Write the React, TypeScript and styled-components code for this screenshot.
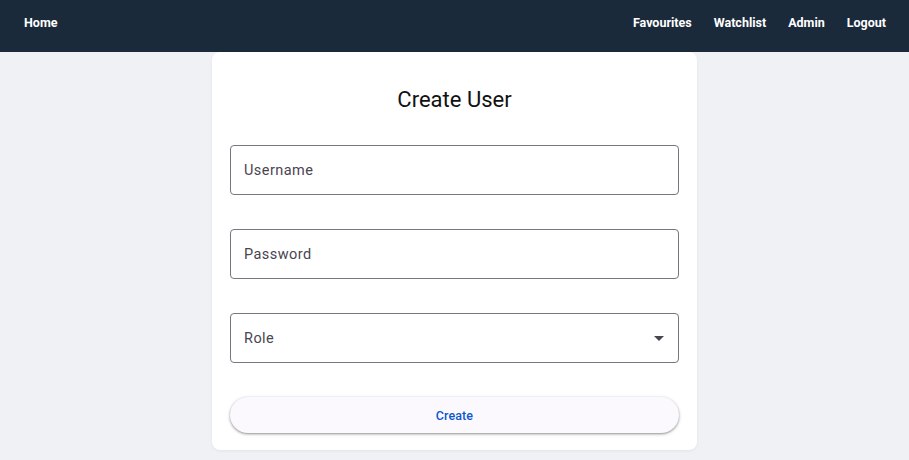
import React from "react";
import styled, { createGlobalStyle } from "styled-components";

const Global = createGlobalStyle`
  html, body { margin: 0; padding: 0; }
  body {
    background: #f0f1f5;
    font-family: Roboto, "Liberation Sans", sans-serif;
    min-height: 460px;
  }
`;

const Nav = styled.nav`
  height: 52px;
  background: #1b2a3b;
  display: flex;
  align-items: flex-start;
  justify-content: space-between;
  padding: 0 23px 0 24px;
  box-sizing: border-box;
`;

const NavGroup = styled.div`
  display: flex;
  gap: 22px;
`;

const NavLink = styled.a`
  color: #ffffff;
  font-size: 12.5px;
  font-weight: 700;
  line-height: 16px;
  padding-top: 15px;
  text-decoration: none;
  cursor: pointer;
`;

const Main = styled.main`
  display: flex;
  justify-content: center;
`;

const Card = styled.section`
  width: 485px;
  box-sizing: border-box;
  background: #ffffff;
  border-radius: 8px;
  padding: 30px 18px 17px;
  display: flex;
  flex-direction: column;
  box-shadow: 0 1px 3px rgba(0, 0, 0, 0.06);
`;

const Title = styled.h1`
  margin: 0 0 27px;
  text-align: center;
  font-size: 22px;
  font-weight: 400;
  line-height: 36px;
  color: #111111;
`;

const Field = styled.div`
  position: relative;
  height: 50px;
  box-sizing: border-box;
  border: 1px solid #79747e;
  border-radius: 4px;
  display: flex;
  align-items: center;
  padding: 0 14px 0 13px;
  margin-bottom: 34px;
`;

const Label = styled.span`
  flex: 1;
  font-size: 14.5px;
  letter-spacing: 0.45px;
  color: #49454f;
`;

const Caret = styled.span`
  width: 0;
  height: 0;
  border-left: 5px solid transparent;
  border-right: 5px solid transparent;
  border-top: 5px solid #49454f;
`;

const Button = styled.button`
  height: 36px;
  border: none;
  border-radius: 18px;
  background: #fbf9fe;
  color: #0b57d0;
  font-family: Roboto, "Liberation Sans", sans-serif;
  font-size: 12.5px;
  font-weight: 500;
  letter-spacing: 0.1px;
  box-shadow: 0 1px 2px rgba(0, 0, 0, 0.3), 0 1px 3px 1px rgba(0, 0, 0, 0.12);
  cursor: pointer;
`;

export default function App() {
  return (
    <>
      <Global />
      <Nav>
        <NavGroup>
          <NavLink>Home</NavLink>
        </NavGroup>
        <NavGroup>
          <NavLink>Favourites</NavLink>
          <NavLink>Watchlist</NavLink>
          <NavLink>Admin</NavLink>
          <NavLink>Logout</NavLink>
        </NavGroup>
      </Nav>
      <Main>
        <Card>
          <Title>Create User</Title>
          <Field>
            <Label>Username</Label>
          </Field>
          <Field>
            <Label>Password</Label>
          </Field>
          <Field>
            <Label>Role</Label>
            <Caret />
          </Field>
          <Button>Create</Button>
        </Card>
      </Main>
    </>
  );
}
